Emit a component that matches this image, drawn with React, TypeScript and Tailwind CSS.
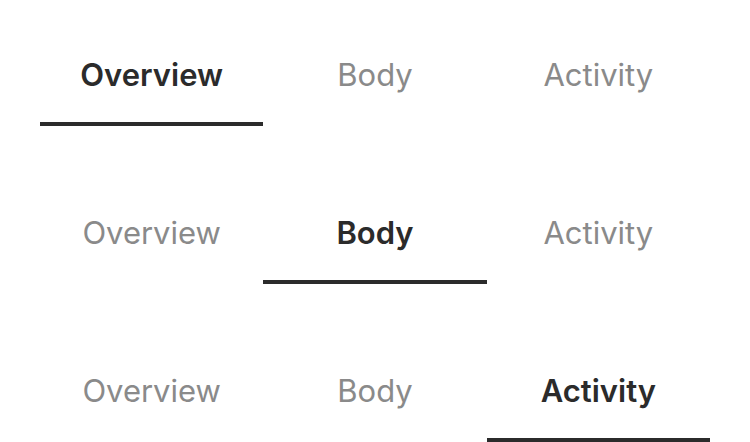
const tabs = ["Overview", "Body", "Activity"];

function TabBar({ active }: { active: number }) {
  return (
    <div className="flex">
      {tabs.map((t, i) => (
        <button
          key={t}
          className={
            i === active
              ? "flex-1 pt-[23px] pb-[27px] border-b-4 border-[#2b2b2b] text-[31px] leading-[40px] font-semibold text-[#2b2b2b]"
              : "flex-1 pt-[23px] pb-[27px] border-b-4 border-transparent text-[31px] leading-[40px] font-normal text-[#8a8a8a]"
          }
        >
          {t}
        </button>
      ))}
    </div>
  );
}

export default function App() {
  return (
    <div className="w-[750px] h-[442px] bg-white px-10 pt-8 flex flex-col gap-16 font-['Inter',sans-serif]">
      <TabBar active={0} />
      <TabBar active={1} />
      <TabBar active={2} />
    </div>
  );
}
